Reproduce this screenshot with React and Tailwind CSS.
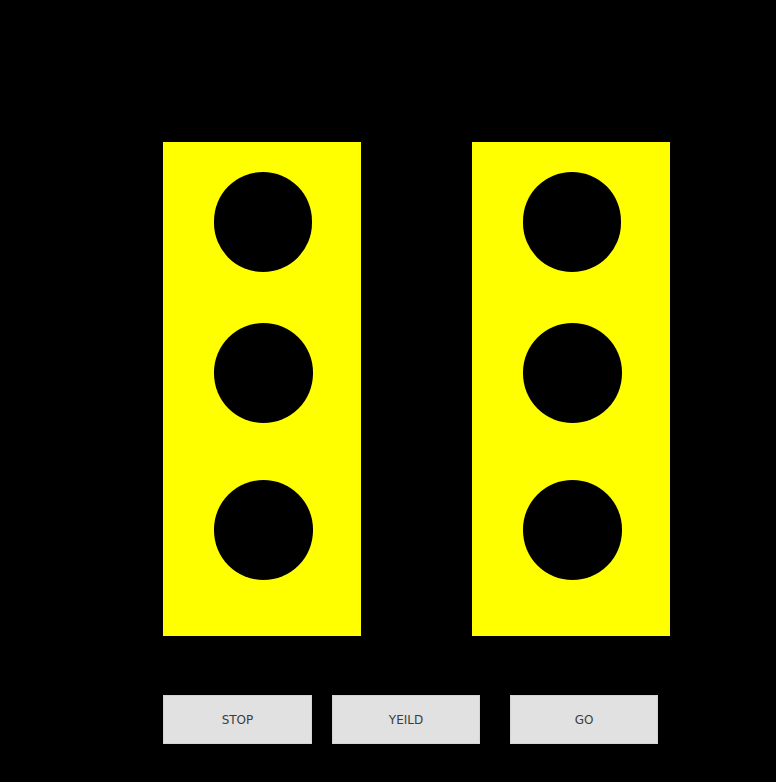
export default function App() {
  const Light = () => (
    <div className="w-[198px] h-[494px] bg-[#ffff00] flex flex-col items-start pl-[51px] pt-[30px]">
      <div className="w-[98px] h-[100px] rounded-full bg-black" />
      <div className="w-[99px] h-[100px] rounded-full bg-black mt-[51px]" />
      <div className="w-[99px] h-[100px] rounded-full bg-black mt-[57px]" />
    </div>
  );
  const btn =
    "h-[49px] bg-[#e1e1e1] border border-[#d4d4d4] text-[#3c3c3c] text-[12px] flex items-center justify-center";
  return (
    <div
      className="w-[776px] h-[782px] bg-black pt-[142px] pl-[163px]"
      style={{ fontFamily: '"DejaVu Sans", Verdana, sans-serif' }}
    >
      <div className="flex gap-[111px]">
        <Light />
        <Light />
      </div>
      <div className="flex mt-[59px]">
        <button className={btn + " w-[149px]"}>STOP</button>
        <button className={btn + " w-[148px] ml-[20px]"}>YEILD</button>
        <button className={btn + " w-[148px] ml-[30px]"}>GO</button>
      </div>
    </div>
  );
}
